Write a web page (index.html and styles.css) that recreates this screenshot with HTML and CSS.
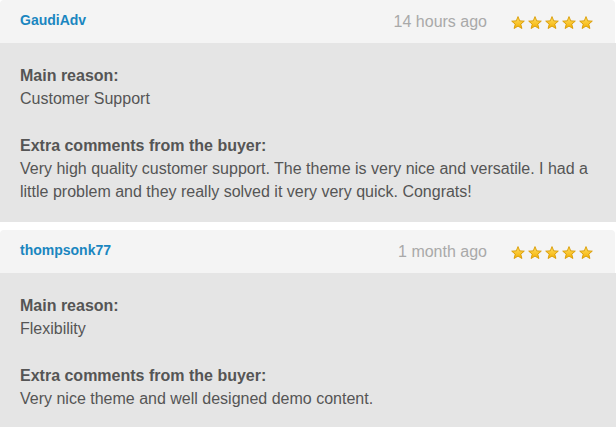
FILE: index.html
```html
<!DOCTYPE html>
<html>
<head>
<meta charset="utf-8">
<link rel="stylesheet" href="styles.css">
</head>
<body>
<svg class="defs" width="0" height="0" aria-hidden="true">
  <defs>
    <linearGradient id="sg" x1="0" y1="0" x2="0" y2="1">
      <stop offset="0" stop-color="#ffe066"/>
      <stop offset="1" stop-color="#f5b000"/>
    </linearGradient>
    <symbol id="star" viewBox="0 0 14 13">
      <path d="M7 0.6 L8.7 4.85 L13.3 5.15 L9.76 8.1 L10.9 12.5 L7 10.1 L3.1 12.5 L4.24 8.1 L0.7 5.15 L5.3 4.85 Z" fill="url(#sg)" stroke="#d89a00" stroke-width="0.9" stroke-linejoin="round"/>
    </symbol>
  </defs>
</svg>
<div class="reviews">
  <div class="review">
    <div class="review-head">
      <span class="user">GaudiAdv</span>
      <span class="date">14 hours ago</span>
      <span class="stars">
        <svg class="star"><use href="#star"/></svg><svg class="star"><use href="#star"/></svg><svg class="star"><use href="#star"/></svg><svg class="star"><use href="#star"/></svg><svg class="star"><use href="#star"/></svg>
      </span>
    </div>
    <div class="review-body">
      <div class="section">
        <div class="label">Main reason:</div>
        <div class="text">Customer Support</div>
      </div>
      <div class="section">
        <div class="label">Extra comments from the buyer:</div>
        <div class="text">Very high quality customer support. The theme is very nice and versatile. I had a little problem and they really solved it very very quick. Congrats!</div>
      </div>
    </div>
  </div>
  <div class="review">
    <div class="review-head">
      <span class="user">thompsonk77</span>
      <span class="date">1 month ago</span>
      <span class="stars">
        <svg class="star"><use href="#star"/></svg><svg class="star"><use href="#star"/></svg><svg class="star"><use href="#star"/></svg><svg class="star"><use href="#star"/></svg><svg class="star"><use href="#star"/></svg>
      </span>
    </div>
    <div class="review-body">
      <div class="section">
        <div class="label">Main reason:</div>
        <div class="text">Flexibility</div>
      </div>
      <div class="section">
        <div class="label">Extra comments from the buyer:</div>
        <div class="text">Very nice theme and well designed demo content.</div>
      </div>
    </div>
  </div>
</div>
</body>
</html>
```

FILE: styles.css
```css
html, body {
  margin: 0;
  padding: 0;
  background: #ffffff;
}
body {
  font-family: "Liberation Sans", Arial, sans-serif;
  color: #555555;
  font-size: 16px;
  line-height: 23px;
}
.defs {
  position: absolute;
  width: 0;
  height: 0;
}
.reviews {
  display: flex;
  flex-direction: column;
  gap: 8px;
}
.review-head {
  height: 43px;
  box-sizing: border-box;
  display: flex;
  align-items: center;
  padding: 0 22px 0 20px;
  margin-right: 1px;
  background: #f4f4f4;
  border-radius: 4px 4px 0 0;
}
.user {
  flex: 1;
  font-size: 14px;
  font-weight: bold;
  color: #1a86c0;
  line-height: 16px;
  margin-top: -3px;
}
.date {
  font-size: 16px;
  line-height: 18px;
  color: #a9a9a9;
  margin-right: 24px;
}
.stars {
  display: flex;
  gap: 3px;
  margin-top: 1px;
}
.star {
  width: 14px;
  height: 13px;
  display: block;
}
.review-body {
  background: #e5e5e5;
  padding: 21px 20px 19px 20px;
}
.section + .section {
  margin-top: 24px;
}
.label {
  font-weight: bold;
}
```
